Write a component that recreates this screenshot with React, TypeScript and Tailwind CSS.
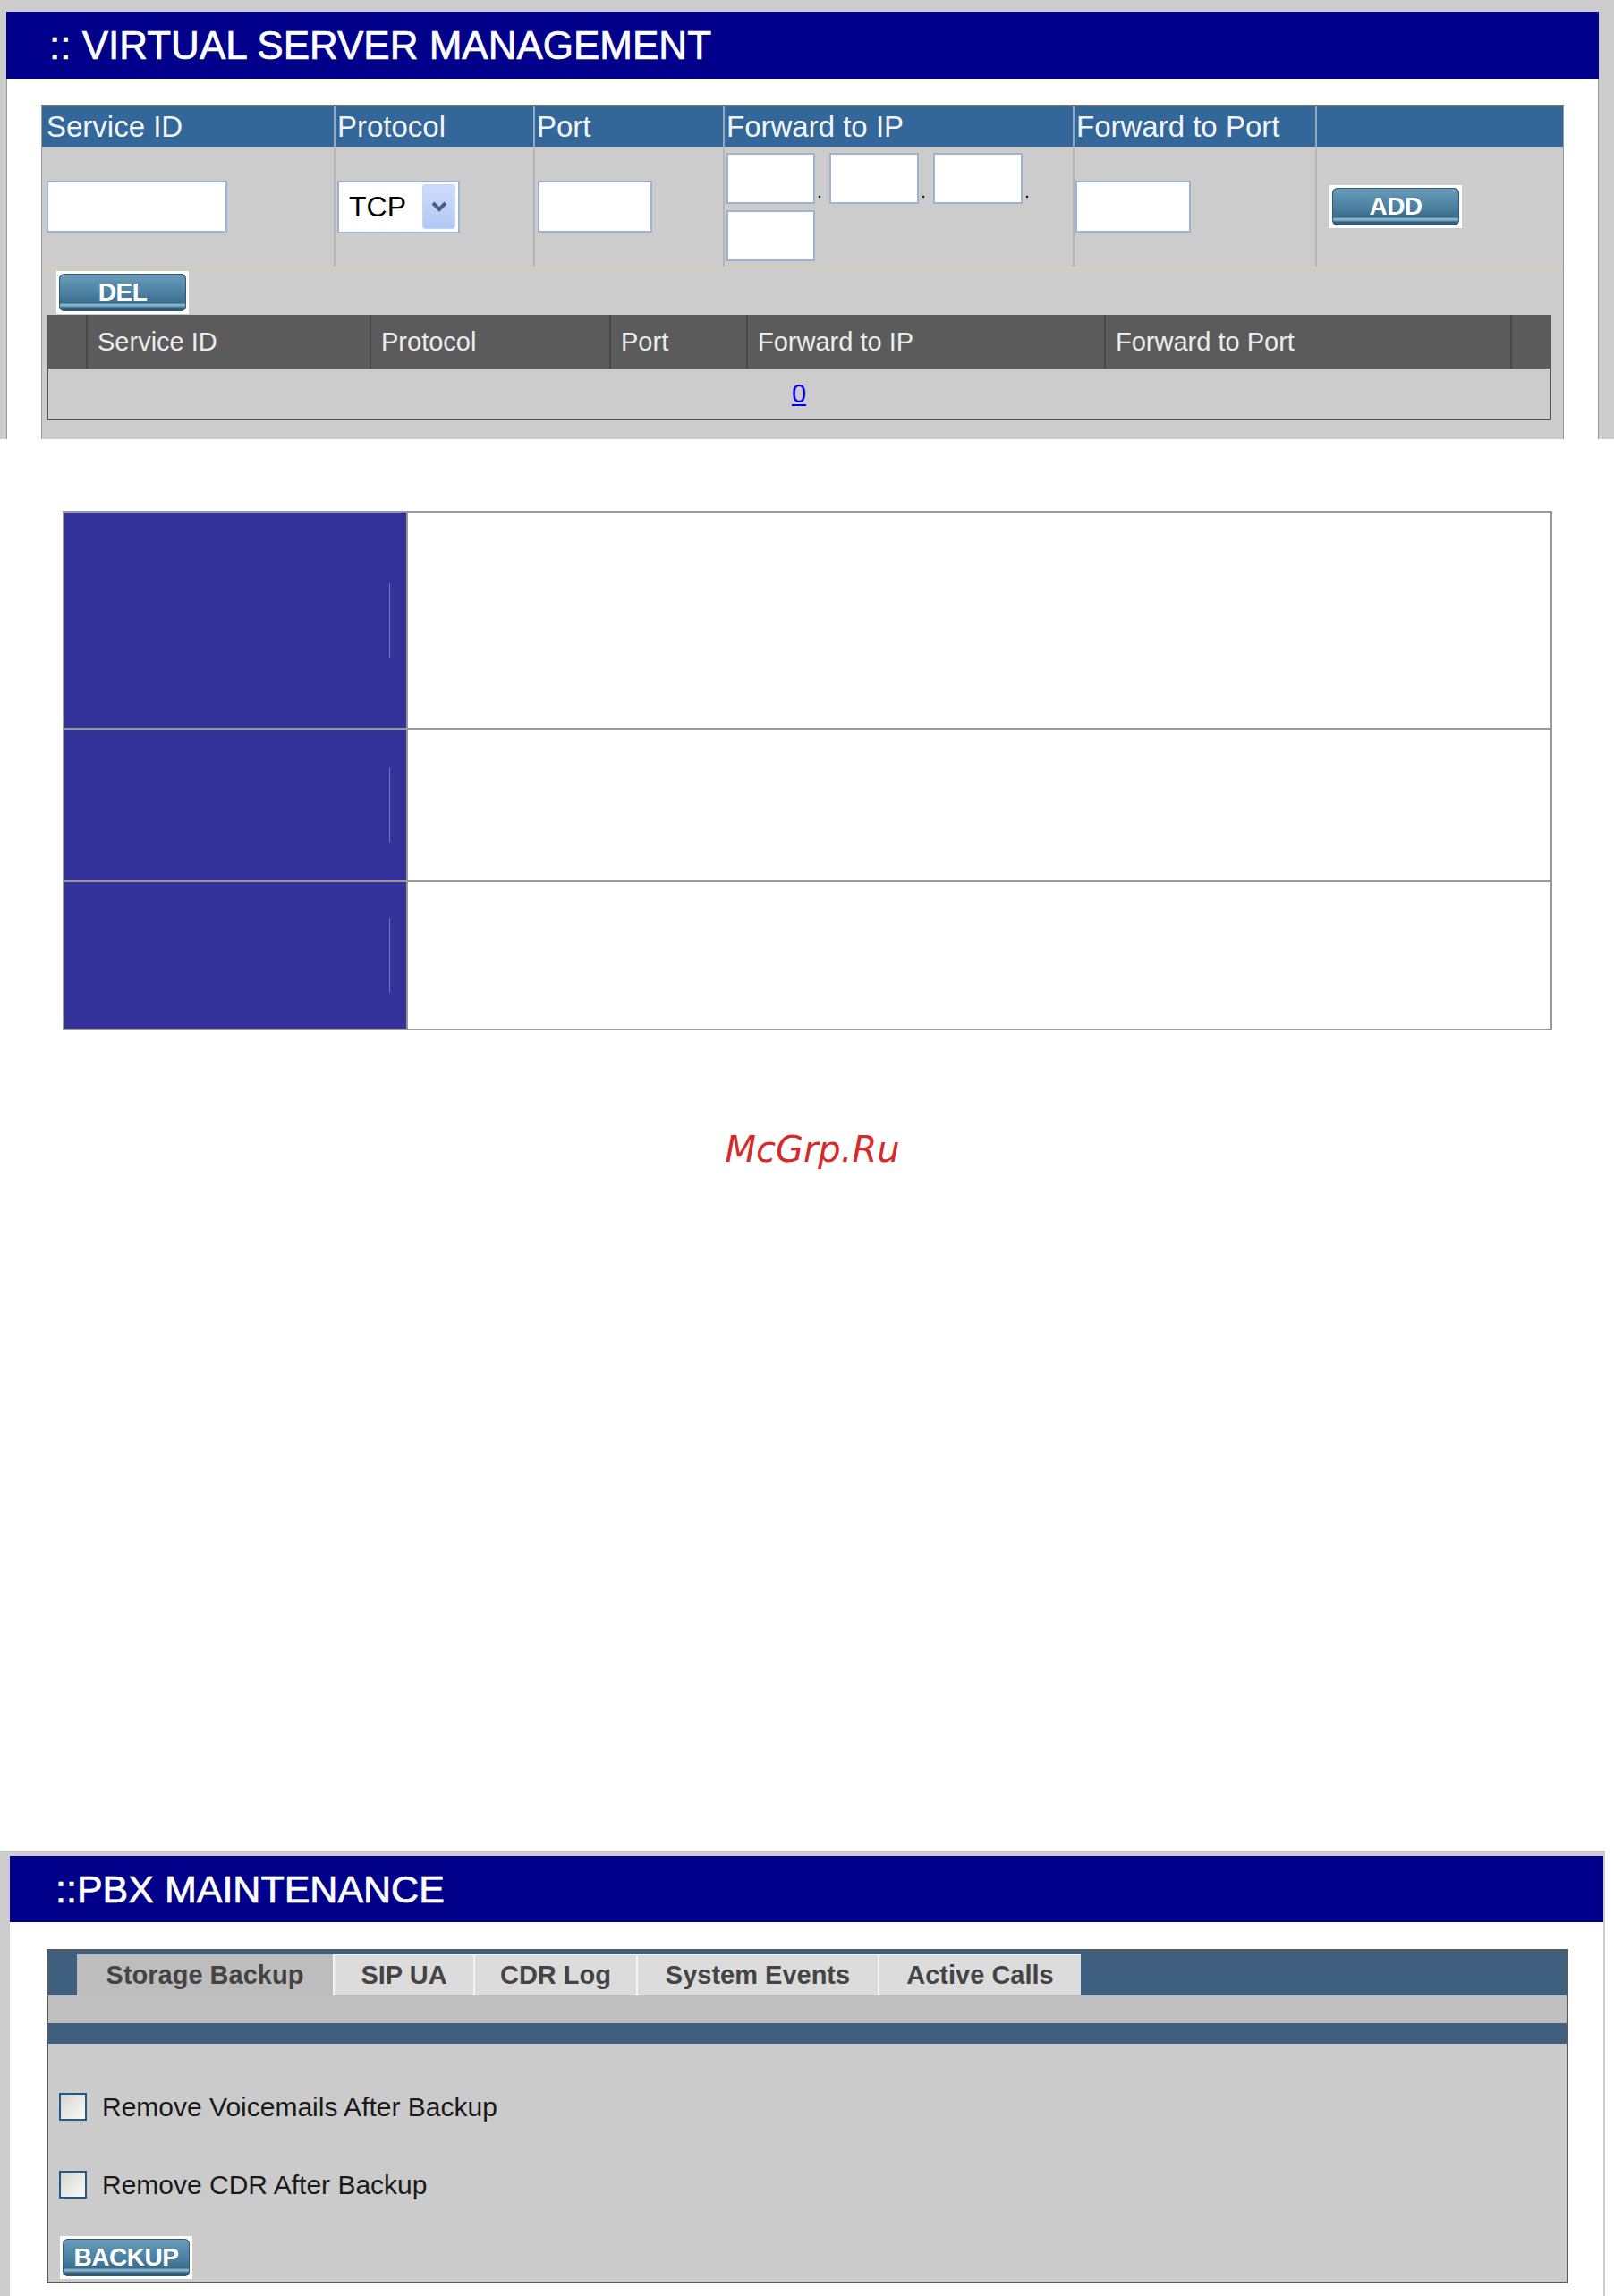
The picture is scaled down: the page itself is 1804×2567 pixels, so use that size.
import React from 'react';

// shared steel-blue push button used by DEL / ADD / BACKUP
const BlueButton = ({ label }: { label: string }) => (
  <div className="w-[148px] h-[48px] bg-white p-[3px]">
    <div className="w-full h-full rounded-[6px] bg-[linear-gradient(to_bottom,#6f9dba_0%,#5389aa_35%,#4a7f9f_55%,#3a6b8b_78%,#9cc0d2_83%,#6c97ae_87%,#2f5d7b_92%,#2a5672_100%)] shadow-[inset_0_0_0_1px_#2f5a76] flex items-center justify-center text-white font-bold text-[28px] leading-none tracking-[-0.5px]">
      {label}
    </div>
  </div>
);

const TextBox = ({ className = '' }: { className?: string }) => (
  <input
    readOnly
    className={`block bg-white border-2 border-[#9db3cf] outline-none ${className}`}
  />
);

const IpDot = () => (
  <span className="w-[16px] self-end pb-[5px] pl-[3px] text-[14px] font-bold leading-none text-black">.</span>
);

const topHeaders = ['Service ID', 'Protocol', 'Port', 'Forward to IP', 'Forward to Port', ''];
const listHeaders = ['', 'Service ID', 'Protocol', 'Port', 'Forward to IP', 'Forward to Port', ''];

const VirtualServer = () => (
  <div className="h-[491px] overflow-hidden bg-[#cccccc] pt-[13px] pl-[7px] pr-[17px]">
    <div className="h-[75px] bg-[#00008b] flex items-center pl-[48px]">
      <span className="text-white text-[44px] leading-none [-webkit-text-stroke:0.7px_#fff]">
        :: VIRTUAL SERVER MANAGEMENT
      </span>
    </div>
    <div className="h-[403px] bg-white border-l border-r border-[#9a9a9a] pt-[29px] pl-[38px] pr-[38px]">
      <div className="h-full border-t-2 border-l border-r border-[#777] border-l-[#9a9a9a] border-r-[#9a9a9a] bg-[#cccccc]">
        {/* column titles */}
        <div className="grid grid-cols-[326px_223px_212px_391px_271px_278px] h-[45px] bg-[#336699]">
          {topHeaders.map((h, i) => (
            <div
              key={i}
              className={`flex items-center text-[33px] leading-none text-[#f2f5f8] ${i === 0 ? 'pl-[5px]' : 'pl-[2px] border-l-2 border-[#97a9bc]'}`}
            >
              {h}
            </div>
          ))}
        </div>
        {/* entry row */}
        <div className="grid grid-cols-[326px_223px_212px_391px_271px_278px] h-[136px] border-b-2 border-[#d6d2b4]">
          <div className="flex items-center pl-[5px]">
            <TextBox className="w-[202px] h-[58px]" />
          </div>
          <div className="flex items-center pl-[2px] border-l-2 border-[#b5b5b5]">
            <div className="w-[137px] h-[59px] border-2 border-[#9db3cf] bg-white flex items-center pl-[11px] pr-[3px]">
              <span className="flex-1 text-[32px] leading-none text-black">TCP</span>
              <div className="w-[37px] h-[50px] rounded-[3px] border border-[#c8d6f2] bg-[linear-gradient(to_bottom,#cddcfc,#b2c8f5)] flex items-center justify-center">
                <svg width="20" height="14" viewBox="0 0 20 14">
                  <polyline points="3,3 10,10 17,3" fill="none" stroke="#4b5d84" strokeWidth="4" />
                </svg>
              </div>
            </div>
          </div>
          <div className="flex items-center pl-[3px] border-l-2 border-[#b5b5b5]">
            <TextBox className="w-[128px] h-[58px]" />
          </div>
          <div className="flex items-center pl-[2px] border-l-2 border-[#b5b5b5]">
            <div className="flex flex-wrap gap-y-[7px] w-[386px]">
              <div className="flex">
                <TextBox className="w-[99px] h-[57px]" />
                <IpDot />
              </div>
              <div className="flex">
                <TextBox className="w-[100px] h-[57px]" />
                <IpDot />
              </div>
              <div className="flex">
                <TextBox className="w-[100px] h-[57px]" />
                <IpDot />
              </div>
              <div className="flex">
                <TextBox className="w-[99px] h-[57px]" />
              </div>
            </div>
          </div>
          <div className="flex items-center pl-[1px] border-l-2 border-[#b5b5b5]">
            <TextBox className="w-[129px] h-[58px]" />
          </div>
          <div className="flex items-center pl-[14px] border-l-2 border-[#b5b5b5]">
            <BlueButton label="ADD" />
          </div>
        </div>
        {/* delete + list */}
        <div className="h-[52px] pt-[3px] pl-[16px]">
          <BlueButton label="DEL" />
        </div>
        <div className="ml-[5px] mr-[13px]">
          <div className="grid grid-cols-[44px_317px_268px_153px_400px_454px_46px] h-[60px] bg-[#5b5b5b]">
            {listHeaders.map((h, i) => (
              <div
                key={i}
                className={`flex items-center text-[29px] leading-none text-[#ececec] ${i === 0 ? '' : 'pl-[11px] border-l-2 border-[#474747]'}`}
              >
                {h}
              </div>
            ))}
          </div>
          <div className="h-[58px] border-l-2 border-r-2 border-b-2 border-[#555] flex items-center justify-center">
            <a className="text-[29px] leading-none text-[#0000ee] underline">0</a>
          </div>
        </div>
      </div>
    </div>
  </div>
);

const BlankRow = ({ h }: { h: string }) => (
  <div className={`flex ${h}`}>
    <div className="w-[384px] bg-[#333399] border-r-2 border-[#999] flex items-center justify-end pr-[18px]">
      <div className="w-px h-[84px] bg-[#7575bb]" />
    </div>
    <div className="flex-1 bg-white" />
  </div>
);

const MiddleBlock = () => (
  <div className="h-[1578px] pt-[80px]">
    <div className="ml-[70px] w-[1665px] border-2 border-[#999] flex flex-col">
      <BlankRow h="h-[241px]" />
      <div className="border-t-2 border-[#999]">
        <BlankRow h="h-[168px]" />
      </div>
      <div className="border-t-2 border-[#999]">
        <BlankRow h="h-[164px]" />
      </div>
    </div>
    <div className="mt-[113px] flex justify-center pl-[12px]">
      <span className="font-['DejaVu_Sans',sans-serif] italic text-[40px] leading-[40px] text-[#d62a2a]">
        McGrp.Ru
      </span>
    </div>
  </div>
);

const tabs = [
  { label: 'Storage Backup', w: 'w-[286px]', active: true },
  { label: 'SIP UA', w: 'w-[157px]', active: false },
  { label: 'CDR Log', w: 'w-[182px]', active: false },
  { label: 'System Events', w: 'w-[270px]', active: false },
  { label: 'Active Calls', w: 'w-[227px]', active: false },
];

const CheckRow = ({ label }: { label: string }) => (
  <div className="flex items-center h-[31px]">
    <div className="w-[31px] h-[31px] border-2 border-[#1f5a8a] bg-[linear-gradient(135deg,#d6d6d0,#fafaf8)]" />
    <span className="ml-[17px] text-[30px] leading-none text-[#1a1a1a]">{label}</span>
  </div>
);

const PbxMaintenance = () => (
  <div className="w-[1794px] h-[498px] bg-[#cccccc] pt-[6px] pl-[11px] pr-[2px]">
    <div className="h-[74px] bg-[#00008b] flex items-center pl-[51px]">
      <span className="text-white text-[43px] leading-none [-webkit-text-stroke:0.7px_#fff]">
        ::PBX MAINTENANCE
      </span>
    </div>
    <div className="h-[418px] bg-white pt-[30px] pl-[41px]">
      <div className="w-[1701px] h-[374px] border-2 border-[#5a5a5a] flex flex-col">
        <div className="h-[50px] bg-[#3f5f7f] flex items-end pl-[32px]">
          {tabs.map((t) => (
            <div
              key={t.label}
              className={`${t.w} h-[46px] flex items-center justify-center font-bold text-[29px] leading-none text-[#444] ${t.active ? 'bg-[#bdbdbd]' : 'bg-[#dcdcdc] border-l-2 border-t border-[#f4f4f4]'}`}
            >
              {t.label}
            </div>
          ))}
        </div>
        <div className="h-[31px] bg-[#bfbfbf]" />
        <div className="h-[23px] bg-[#3f5f7f]" />
        <div className="flex-1 bg-[#cbcbcb] pt-[55px] pl-[12px]">
          <CheckRow label="Remove Voicemails After Backup" />
          <div className="mt-[56px]">
            <CheckRow label="Remove CDR After Backup" />
          </div>
          <div className="mt-[42px] ml-[1px]">
            <BlueButton label="BACKUP" />
          </div>
        </div>
      </div>
    </div>
  </div>
);

const App = () => {
  return (
    <div className="w-[1804px] bg-white font-['Liberation_Sans',Arial,sans-serif]">
      <VirtualServer />
      <MiddleBlock />
      <PbxMaintenance />
    </div>
  );
};

export default App;
